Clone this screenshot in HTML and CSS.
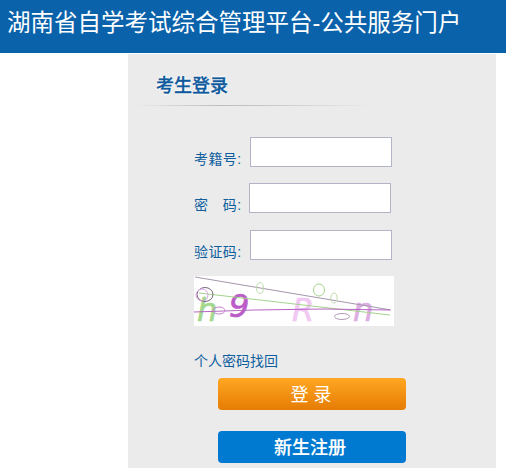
FILE: index.html
```html
<!DOCTYPE html>
<html lang="zh-CN">
<head>
<meta charset="utf-8">
<title>湖南省自学考试综合管理平台-公共服务门户</title>
<link rel="stylesheet" href="styles.css">
</head>
<body>
<header class="site-header"><h1 class="site-title">湖南省自学考试综合管理平台-公共服务门户</h1></header>
<main class="panel">
  <h2 class="panel-title">考生登录</h2>
  <div class="divider"></div>
  <form class="login-form">
    <div class="row row-first"><label class="label">考籍号:</label><input class="field" type="text"></div>
    <div class="row row-second"><label class="label label-short">密　码:</label><input class="field" type="password"></div>
    <div class="row row-third"><label class="label">验证码:</label><input class="field" type="text"></div>
    <svg class="captcha" width="200" height="50" viewBox="0 0 200 50">
      <rect width="200" height="50" fill="#fff"/>
      <text x="3" y="45" class="cap cap-h">h</text>
      <text x="35" y="41" class="cap cap-9">9</text>
      <text x="98" y="45" class="cap cap-r">R</text>
      <text x="159" y="45" class="cap cap-n">n</text>
      <path d="M1 1 L197 34" stroke="#a596ad" stroke-width="1" fill="none"/>
      <path d="M5 17 L196 39" stroke="#a5d48c" stroke-width="1" fill="none"/>
      <path d="M0 36 L60 34 L130 33 L196 34" stroke="#b565c0" stroke-width="1" fill="none"/>
      <ellipse cx="11" cy="18.500" rx="8" ry="7" fill="none" stroke="#77677c"/>
      <ellipse cx="8" cy="19" rx="6" ry="6" fill="none" stroke="#d9a0df"/>
      <ellipse cx="25" cy="34.500" rx="6" ry="3.500" fill="none" stroke="#c77fd0"/>
      <ellipse cx="66" cy="12" rx="3.500" ry="5.500" fill="none" stroke="#bcdcaa"/>
      <ellipse cx="125" cy="14" rx="5.500" ry="6" fill="none" stroke="#a5d48c"/>
      <ellipse cx="140" cy="22" rx="3.200" ry="5" fill="none" stroke="#bcdcaa"/>
      <ellipse cx="148" cy="40.500" rx="7.500" ry="3" fill="none" stroke="#b09ab5"/>
    </svg>
    <a class="recover" href="#">个人密码找回</a>
    <button class="btn btn-login" type="button">登 录</button>
    <button class="btn btn-register" type="button">新生注册</button>
  </form>
</main>
</body>
</html>
```
FILE: styles.css
```css
* {
  box-sizing: border-box;
}

html,
body {
  margin: 0;
  padding: 0;
  height: 468px;
  overflow: hidden;
  background: #fff;
}

body {
  font-family: "Liberation Sans", "Noto Sans CJK SC", sans-serif;
}

.site-header {
  height: 53px;
  background: #0a62ab;
  padding: 7px 0 0 7px;
}

.site-title {
  margin: 0;
  font-size: 23.500px;
  line-height: 32px;
  font-weight: 400;
  color: #fff;
  white-space: nowrap;
}

.panel {
  width: 368px;
  height: 414px;
  margin: 1px 0 0 128px;
  background: #ebebeb;
  overflow: hidden;
}

.panel-title {
  margin: 20px 0 0 28px;
  font-size: 18px;
  line-height: 24px;
  font-weight: 500;
  color: #0f5a9c;
  -webkit-text-stroke: 0.3px #0f5a9c;
  text-shadow: 0 0 2px #fff, 0 0 3px #fff, 0 0 3px #fff;
}

.divider {
  width: 240px;
  height: 1px;
  margin: 7px 0 0 7px;
  background: linear-gradient(90deg, #ebebeb, #bdbdbd 35%, #c4c4c4 50%, #ebebeb);
}

.login-form {
  display: flex;
  flex-direction: column;
  align-items: flex-start;
  padding-left: 66px;
}

.row {
  display: flex;
  align-items: flex-end;
  height: 30px;
}

.row-first {
  margin-top: 31px;
}

.row-second {
  margin-top: 16px;
}

.row-third {
  margin-top: 17px;
}

.label {
  width: 56px;
  font-size: 14px;
  line-height: 15px;
  letter-spacing: 0.4px;
  color: #0f5f9f;
  white-space: nowrap;
}

.label-short {
  width: 55px;
}

.field {
  width: 142px;
  height: 30px;
  padding: 0 4px;
  border: 1px solid #b4b4c8;
  background: #fff;
}

.captcha {
  display: block;
  margin-top: 16px;
  overflow: visible;
}

.cap {
  font-family: "DejaVu Sans", sans-serif;
  font-size: 32px;
  font-style: italic;
  stroke-width: 0.7px;
}

.cap-h {
  fill: #a5d88f;
  stroke: #a5d88f;
}

.cap-9 {
  fill: #bb5cc8;
  stroke: #bb5cc8;
}

.cap-r {
  fill: #f0c8f2;
  stroke: #f0c8f2;
}

.cap-n {
  fill: #dcaee2;
  stroke: #dcaee2;
}

.recover {
  margin-top: 27px;
  font-size: 14px;
  line-height: 16px;
  color: #0f5f9f;
  text-decoration: none;
}

.btn {
  display: block;
  width: 188px;
  height: 32px;
  margin-left: 24px;
  padding: 0 2px 3px 0;
  border: 0;
  border-radius: 4px;
  color: #fff;
  font-family: inherit;
  font-size: 18px;
}

.btn-login {
  margin-top: 9px;
  background: linear-gradient(#ffa722, #e67c04);
}

.btn-register {
  margin-top: 21px;
  padding: 0 4px 2px 0;
  background: #0079d0;
  font-weight: 500;
  -webkit-text-stroke: 0.2px #fff;
}
```
